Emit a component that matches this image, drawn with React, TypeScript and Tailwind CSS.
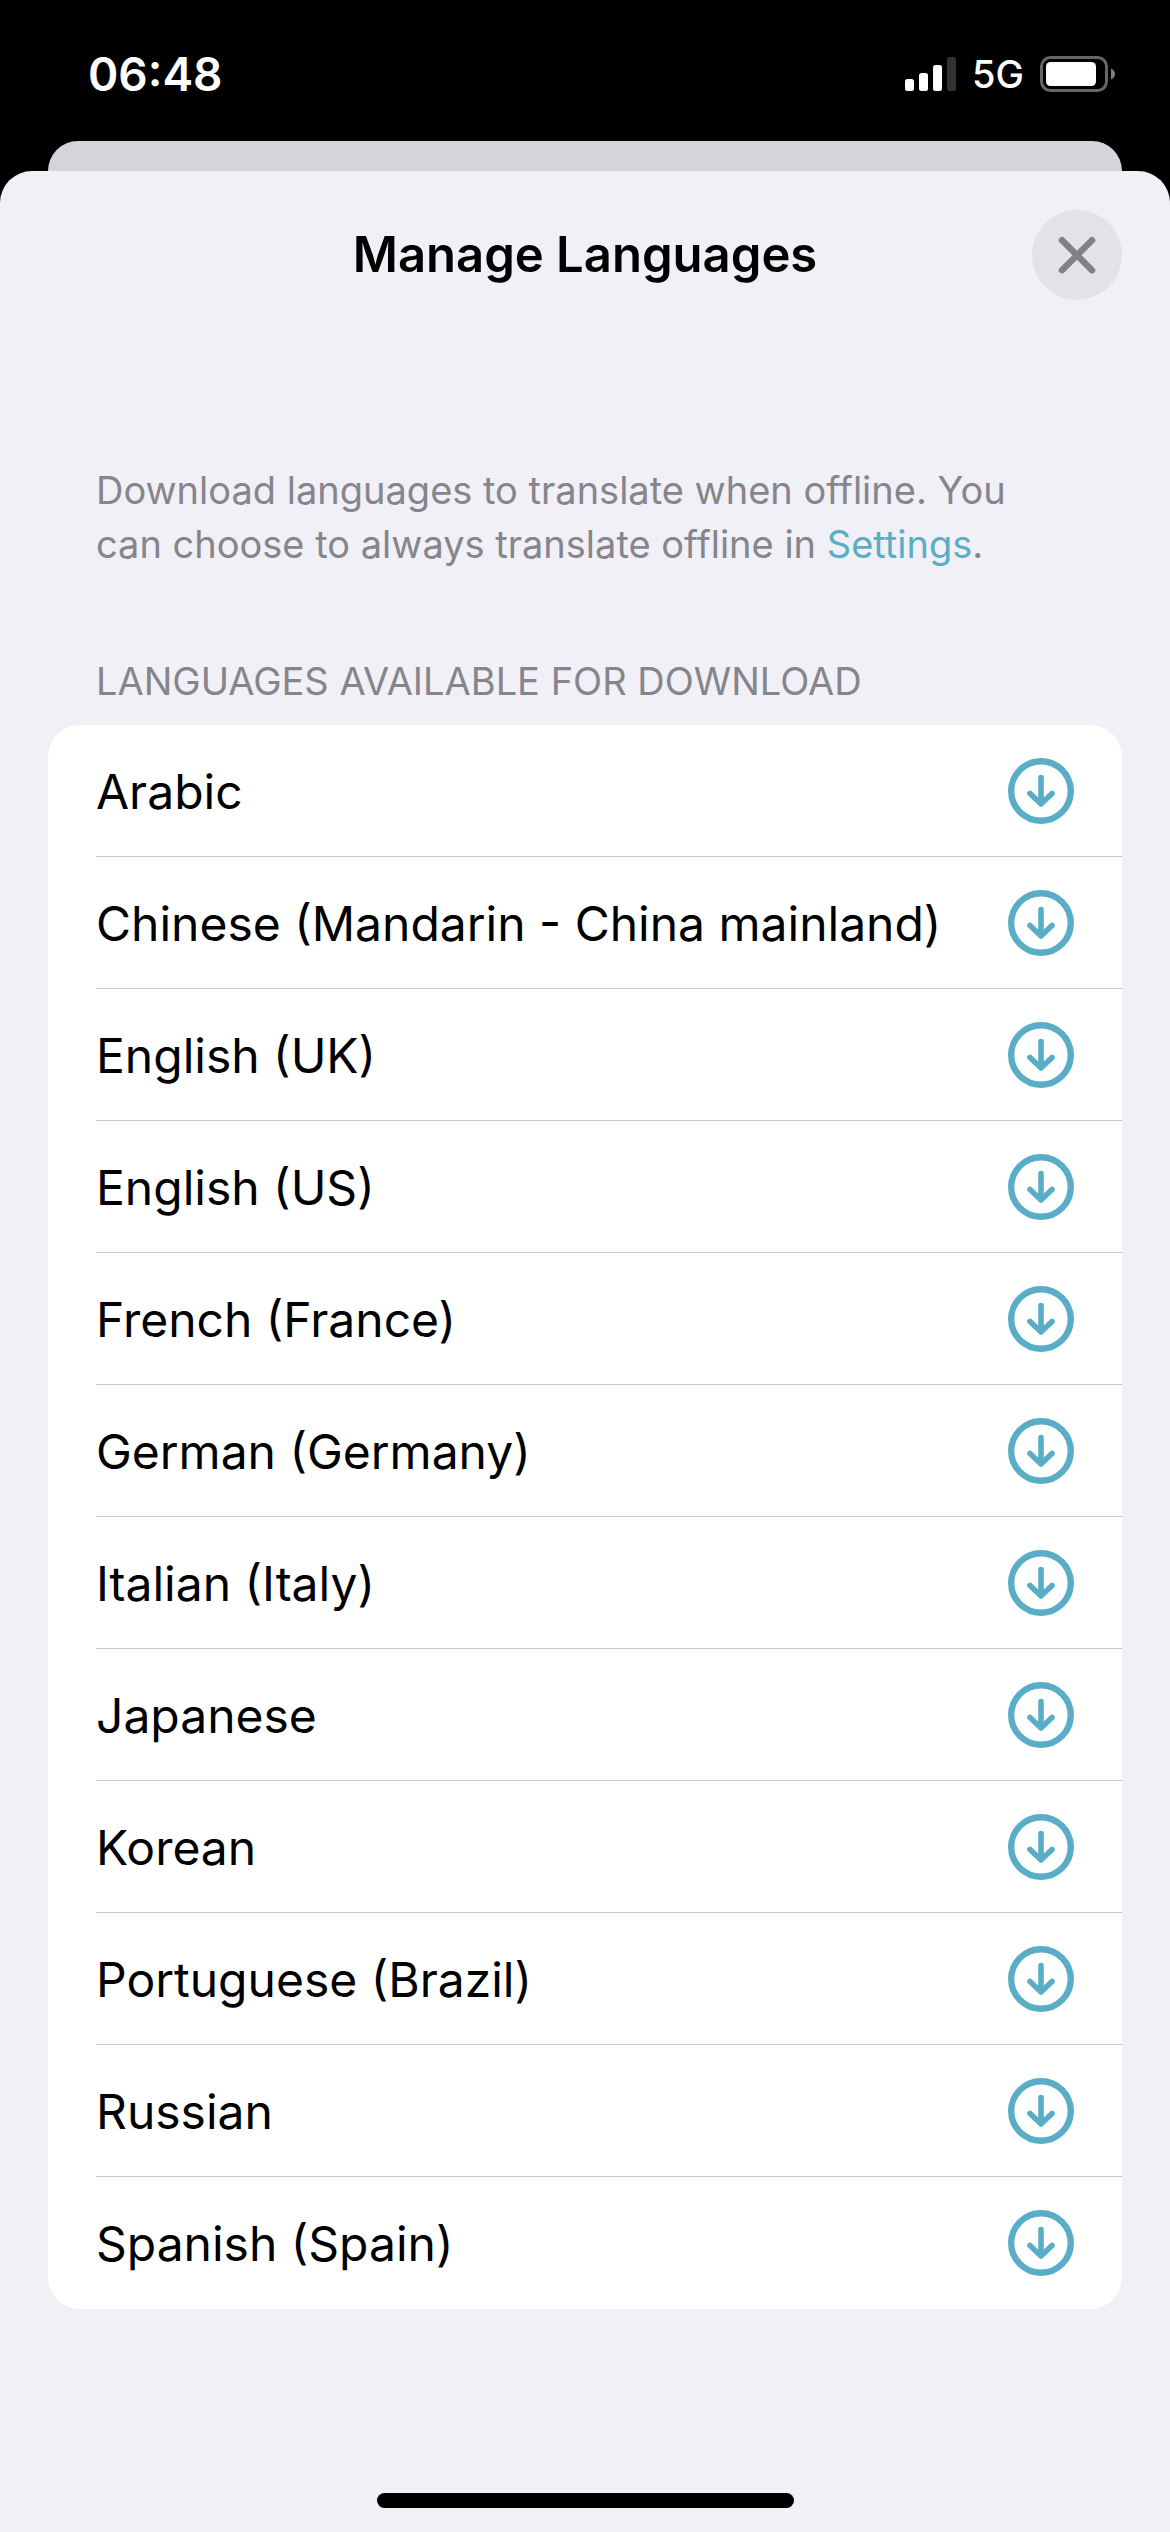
import React, { useState } from 'react'

const LANGUAGES = [
  'Arabic',
  'Chinese (Mandarin - China mainland)',
  'English (UK)',
  'English (US)',
  'French (France)',
  'German (Germany)',
  'Italian (Italy)',
  'Japanese',
  'Korean',
  'Portuguese (Brazil)',
  'Russian',
  'Spanish (Spain)',
]

function SignalIcon() {
  return (
    <svg width="51" height="34" viewBox="0 0 51 34" fill="#fff" aria-hidden="true">
      <rect x="0" y="22" width="9" height="12" rx="2.5" />
      <rect x="14" y="16" width="9" height="18" rx="2.5" />
      <rect x="28" y="8" width="9" height="26" rx="2.5" />
      <rect x="42" y="0" width="9" height="34" rx="2.5" fill="#333" />
    </svg>
  )
}

function BatteryIcon() {
  return (
    <svg width="75" height="36" viewBox="0 0 75 36" fill="none" aria-hidden="true">
      <rect x="1.5" y="1.5" width="65" height="33" rx="9" stroke="#666" strokeWidth="3" />
      <rect x="6" y="6" width="50" height="24" rx="4.5" fill="#fff" />
      <path d="M71 12.5C73.4 13.6 75 15.7 75 18C75 20.3 73.4 22.4 71 23.5Z" fill="#808080" />
    </svg>
  )
}

function DownloadIcon() {
  return (
    <svg width="66" height="66" viewBox="0 0 66 66" fill="none" stroke="currentColor" strokeLinecap="round" strokeLinejoin="round" aria-hidden="true">
      <circle cx="33" cy="33" r="29.8" strokeWidth="6.4" />
      <path d="M33 19.5V45.5M22 35.5L33 46L44 35.5" strokeWidth="5.6" />
    </svg>
  )
}

function StatusBar() {
  return (
    <div className="flex h-[141px] items-start justify-between pt-[46px] pr-[55px] pl-[88px] text-white">
      <span className="text-[46px] leading-[56px] font-semibold">06:48</span>
      <div className="flex h-14 items-center">
        <SignalIcon />
        <span className="ml-4 text-[38px] leading-[56px] font-medium">5G</span>
        <span className="ml-4">
          <BatteryIcon />
        </span>
      </div>
    </div>
  )
}

export default function App() {
  const [open, setOpen] = useState(true)
  const [queued, setQueued] = useState<string[]>([])

  function download(name: string) {
    if (queued.includes(name)) return
    setQueued([...queued, name])
  }

  return (
    <div className="flex min-h-screen flex-col bg-black font-['Inter','Liberation_Sans',sans-serif] text-black">
      <StatusBar />
      <div className="mx-12 h-[30px] rounded-t-[30px] bg-[#d5d4d9]" />
      {open && (
        <main className="flex grow flex-col rounded-t-[32px] bg-[#f1f0f6] px-12">
          <header className="grid grid-cols-[90px_1fr_90px] items-center pt-[39px]">
            <h1 className="col-start-2 text-center text-[49px] leading-[60px] font-semibold">Manage Languages</h1>
            <button
              type="button"
              aria-label="Close"
              onClick={() => setOpen(false)}
              className="flex size-[90px] items-center justify-center rounded-full bg-[#e3e2e7] text-[#828187]"
            >
              <svg width="38" height="38" viewBox="0 0 38 38" fill="none" stroke="currentColor" strokeWidth="6.5" strokeLinecap="round" aria-hidden="true">
                <path d="M4 4.2L34 34.2M34 4.2L4 34.2" />
              </svg>
            </button>
          </header>

          <p className="mt-[163px] px-12 text-[38px] leading-[54px] text-[#86858b]">
            Download languages to translate when offline. You can choose to always translate offline in{' '}
            <a href="#settings" className="text-[#5aadc6]">Settings</a>.
          </p>

          <h2 className="mt-[83px] px-12 text-[38px] leading-[54px] text-[#86858b] uppercase">
            Languages available for download
          </h2>

          <ul className="mt-[17px] overflow-hidden rounded-[32px] bg-white pl-12">
            {LANGUAGES.map((name) => (
              <li key={name} className="flex h-[132px] items-center justify-between border-b border-[#c6c6c8] pt-px pr-12 last:border-white">
                <span className="pt-0.5 text-[48px] leading-[60px]">{name}</span>
                <button type="button" aria-label={`Download ${name}`} onClick={() => download(name)} className="text-[#5aadc6]">
                  <DownloadIcon />
                </button>
              </li>
            ))}
          </ul>

          <div className="mx-auto mt-auto mb-6 h-[15px] w-[417px] rounded-full bg-black" />
        </main>
      )}
    </div>
  )
}
